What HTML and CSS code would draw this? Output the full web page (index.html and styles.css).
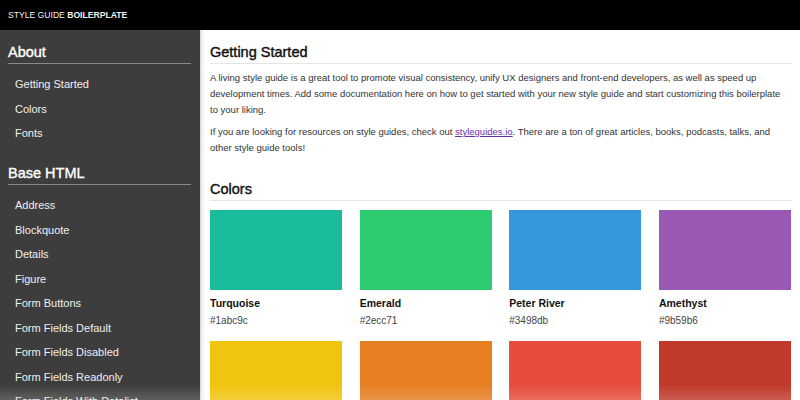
FILE: index.html
```html
<!DOCTYPE html>
<html lang="en">
<head>
<meta charset="utf-8">
<title>Style Guide Boilerplate</title>
<link rel="stylesheet" href="styles.css">
</head>
<body>
<header class="topbar">
  <span class="brand">STYLE GUIDE <b>BOILERPLATE</b></span>
</header>
<div class="layout">
  <nav class="sidebar">
    <h2 class="side-title">About</h2>
    <ul class="side-list">
      <li>Getting Started</li>
      <li>Colors</li>
      <li>Fonts</li>
    </ul>
    <h2 class="side-title side-title-gap">Base HTML</h2>
    <ul class="side-list">
      <li>Address</li>
      <li>Blockquote</li>
      <li>Details</li>
      <li>Figure</li>
      <li>Form Buttons</li>
      <li>Form Fields Default</li>
      <li>Form Fields Disabled</li>
      <li>Form Fields Readonly</li>
      <li>Form Fields With Datalist</li>
    </ul>
  </nav>
  <main class="main">
    <section class="section">
      <h1 class="section-title">Getting Started</h1>
      <p class="text">A living style guide is a great tool to promote visual consistency, unify UX designers and front-end developers, as well as speed up development times. Add some documentation here on how to get started with your new style guide and start customizing this boilerplate to your liking.</p>
      <p class="text">If you are looking for resources on style guides, check out <a class="link" href="#">styleguides.io</a>. There are a ton of great articles, books, podcasts, talks, and other style guide tools!</p>
    </section>
    <section class="section section-gap">
      <h1 class="section-title">Colors</h1>
      <div class="swatches">
        <div class="swatch"><div class="chip turquoise"></div><div class="name">Turquoise</div><div class="hex">#1abc9c</div></div>
        <div class="swatch"><div class="chip emerald"></div><div class="name">Emerald</div><div class="hex">#2ecc71</div></div>
        <div class="swatch"><div class="chip peter"></div><div class="name">Peter River</div><div class="hex">#3498db</div></div>
        <div class="swatch"><div class="chip amethyst"></div><div class="name">Amethyst</div><div class="hex">#9b59b6</div></div>
        <div class="swatch"><div class="chip sunflower"></div><div class="name">Sunflower</div><div class="hex">#f1c40f</div></div>
        <div class="swatch"><div class="chip carrot"></div><div class="name">Carrot</div><div class="hex">#e67e22</div></div>
        <div class="swatch"><div class="chip alizarin"></div><div class="name">Alizarin</div><div class="hex">#e74c3c</div></div>
        <div class="swatch"><div class="chip pomegranate"></div><div class="name">Pomegranate</div><div class="hex">#c0392b</div></div>
      </div>
    </section>
  </main>
</div>
<div class="fade"></div>
</body>
</html>
```
FILE: styles.css
```css
* { box-sizing: border-box; }
html, body { margin: 0; padding: 0; }
body {
  font-family: "Liberation Sans", Arial, Helvetica, sans-serif;
  color: #222;
  background: #fff;
  height: 400px;
  overflow: hidden;
}
.topbar {
  height: 30px;
  background: #000;
  color: #f2f2f2;
  display: flex;
  align-items: center;
  padding-left: 8px;
  font-size: 8.6px;
}
.brand b { font-weight: bold; }
.layout {
  display: flex;
  height: 370px;
}
.sidebar {
  width: 200px;
  flex: 0 0 200px;
  background: #3d3d3d;
  padding: 12px 9px 0 8px;
  color: #f0f0f0;
}
.side-title {
  margin: 0;
  font-size: 14.5px;
  font-weight: normal;
  line-height: 21px;
  padding-bottom: 0;
  border-bottom: 1px solid #8a8a8a;
  color: #fff;
  -webkit-text-stroke: 0.35px #fff;
}
.side-title-gap { margin-top: 17.5px; }
.side-list {
  list-style: none;
  margin: 8px 0 0;
  padding: 0;
}
.side-list li {
  font-size: 11px;
  line-height: 14.5px;
  padding: 5px 7px;
  color: #f0f0f0;
  white-space: nowrap;
}
.main {
  flex: 1;
  padding: 12px 8px 0 9px;
  border-left: 1px solid #d8d8d8;
  box-shadow: inset 3px 0 4px -2px rgba(0,0,0,0.12);
}
.section-title {
  margin: 0;
  font-size: 14.5px;
  font-weight: normal;
  line-height: 21px;
  padding-bottom: 0;
  border-bottom: 1px solid #e6e6e6;
  color: #111;
  -webkit-text-stroke: 0.4px #111;
}
.section-gap { margin-top: 23px; }
.text {
  margin: 6px 0 0;
  padding-right: 3px;
  font-size: 9.5px;
  line-height: 16px;
  color: #333;
}
.link { color: #6b2fa8; text-decoration: underline; }
.swatches {
  margin-top: 9px;
  display: grid;
  grid-template-columns: repeat(4, 1fr);
  column-gap: 17.5px;
  row-gap: 12px;
  padding-right: 1px;
}
.chip { height: 80px; }
.name {
  margin-top: 5px;
  font-size: 10.5px;
  font-weight: bold;
  line-height: 16px;
  color: #111;
}
.hex {
  margin-top: 2px;
  font-size: 10px;
  line-height: 16px;
  color: #444;
}
.turquoise { background: #1abc9c; }
.emerald { background: #2ecc71; }
.peter { background: #3498db; }
.amethyst { background: #9b59b6; }
.sunflower { background: #f1c40f; }
.carrot { background: #e67e22; }
.alizarin { background: #e74c3c; }
.pomegranate { background: #c0392b; }
.fade {
  position: fixed;
  left: 0;
  right: 0;
  bottom: 0;
  height: 16px;
  background: linear-gradient(to bottom, rgba(255,255,255,0), rgba(255,255,255,0.18));
  pointer-events: none;
}
```
